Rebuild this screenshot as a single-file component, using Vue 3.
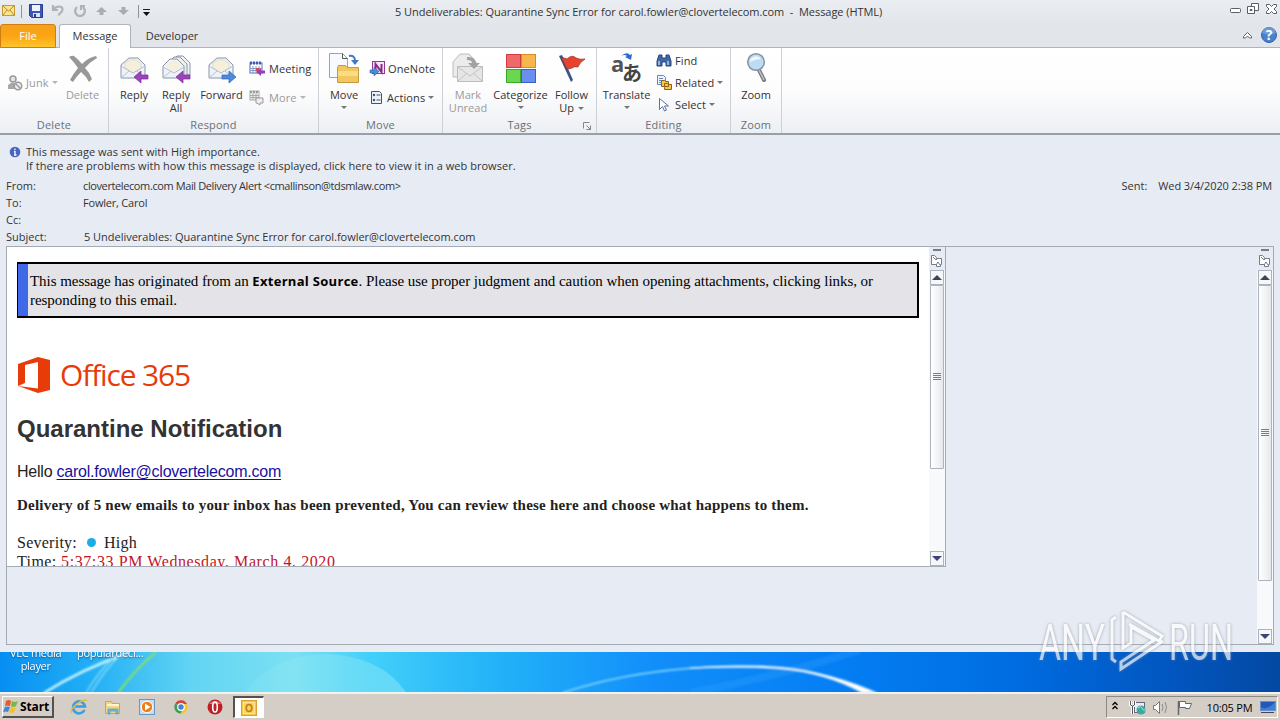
<template>
  <div class="screen">
    <div class="window">
      <header class="titlebar">
        <div class="quick">
          <svg width="155" height="24" viewBox="0 0 155 24">
            <rect x="2.500" y="5.500" width="12" height="10" fill="#fbe58a" stroke="#c79a35" />
            <path d="M3 6l5.500 5L14 6M3 15l4-5m7 5l-4-5" fill="none" stroke="#b98a2c" />
            <path d="M21.500 5v13" stroke="#8d939b" />
            <path d="M29.500 4.500h13v13h-11l-2-2z" fill="#3c57b5" stroke="#283c8c" />
            <rect x="32" y="5" width="8" height="6" fill="#eef2fb" />
            <rect x="33" y="13" width="7" height="4" fill="#dbe1ee" />
            <rect x="34" y="14" width="2" height="3" fill="#283c8c" />
            <path d="M53 5v5h5M53.500 9.500c3-4 9-4 9 0 0 3-3 3-4 6" fill="none" stroke="#b0b3b7" stroke-width="2.200" />
            <path d="M77 7c-4 4-1 9 3 9s7-5 3-9M81 10V6h4" fill="none" stroke="#b0b3b7" stroke-width="2.200" />
            <path d="M101.500 7l5.500 5h-3.500v3h-4v-3H96z" fill="#aaadb1" />
            <path d="M118 10h3.500V7h4v3h3.500l-5.500 5z" fill="#aaadb1" />
            <path d="M138.500 5v13" stroke="#8d939b" />
            <path d="M143 9.500h7" stroke="#222" />
            <path d="M143 12h7l-3.500 4z" fill="#111" />
          </svg>
        </div>
        <span class="caption">5 Undeliverables: Quarantine Sync Error for carol.fowler@clovertelecom.com&nbsp; -&nbsp; Message (HTML)</span>
        <svg class="winbtns" width="52" height="24" viewBox="0 0 52 24" fill="#fff" stroke="#5a6069">
          <rect x="2.500" y="8.500" width="10" height="4" rx="1" />
          <path d="M23.500 3.500h7v7h-7z" />
          <path d="M19.500 6.500h7v7h-7zM22 9.500h2v1h-2z" />
          <path d="M38.500 4.500h3l2 2 2-2h3v2l-2.500 2.500 2.500 2.500v2h-3l-2-2-2 2h-3v-2l2.500-2.500-2.500-2.500z" />
        </svg>
      </header>

      <nav class="tabs">
        <span class="tab file">File</span>
        <span class="tab message">Message</span>
        <span class="tab developer">Developer</span>
        <svg class="help" width="42" height="24" viewBox="0 0 42 24">
          <path d="M5.500 12.500l4-4 4 4v1.500h-2l-2-2-2 2h-2z" fill="#fff" stroke="#5a6069" />
          <circle cx="31" cy="11" r="7.500" fill="#4a80cc" stroke="#3262ad" />
          <path d="M24 9a7 6 0 0 1 14 0q-7 3-14 0z" fill="#82acdf" opacity=".6" />
          <text x="31" y="16" text-anchor="middle" class="qmark">?</text>
        </svg>
      </nav>

      <section class="ribbon">
        <div class="group g-delete">
          <div class="tools">
            <div class="col c-junk">
              <div class="small off">
                <svg width="16" height="18" viewBox="0 0 16 18">
                  <circle cx="6" cy="5" r="3" fill="#e5e5e5" stroke="#999" stroke-width="1.500" />
                  <path d="M1 15V11q5-5 9 0v4z" fill="#a8a8a8" />
                  <circle cx="11" cy="12" r="3.700" fill="#f0f0f0" stroke="#999" stroke-width="1.500" />
                  <path d="M8.500 9.500l5 5" stroke="#999" stroke-width="1.500" />
                </svg>
                <span>Junk</span><i class="arrow"></i>
              </div>
            </div>
            <div class="big off b-delete">
              <svg width="32" height="32" viewBox="0 0 32 32">
                <path d="M2 5q3-2 5-1 5 4 8 8 7-7 14-8l1 2q-7 4-12 10 5 5 7 11l-3 3q-3-6-8-10-5 5-8 10l-3-2q3-6 8-12Q7 10 2 5z" fill="#989898" />
              </svg>
              <span>Delete</span>
            </div>
          </div>
          <div class="glabel">Delete</div>
        </div>

        <div class="group g-respond">
          <div class="tools">
            <div class="big b-reply">
              <svg width="32" height="32" viewBox="0 0 32 32">
                <path d="M3 13l8-7h9l7 7v13H3z" fill="#eef3fa" stroke="#8996a8" />
                <path d="M7 16v-5l5-3h6l5 3v5l-8 5z" fill="#f5efdc" stroke="#ddd6be" stroke-width=".7" />
                <path d="M3 14l12 7 12-7M3 26l8-7m16 7l-8-7" fill="none" stroke="#b4c0d2" />
                <path d="M16 25l7-6v4h7v4h-7v4z" fill="#9b45bb" stroke="#7a2a9c" stroke-width=".7" />
              </svg>
              <span>Reply</span>
            </div>
            <div class="big b-replyall">
              <svg width="32" height="32" viewBox="0 0 32 32">
                <path d="M11 10l6-6h6l7 7v12H13z" fill="#eef3fa" stroke="#8996a8" />
                <path d="M8 11l6-6h6l7 7v12H9z" fill="#f3eee0" stroke="#8996a8" />
                <path d="M3 14l7-7h7l7 7v12H3z" fill="#eef3fa" stroke="#8996a8" />
                <path d="M7 16v-4l4-3h5l4 3v4l-6 4z" fill="#f5efdc" />
                <path d="M3 15l11 6 10-6M3 26l8-7" fill="none" stroke="#b4c0d2" />
                <path d="M16 25l7-6v4h7v4h-7v4z" fill="#9b45bb" stroke="#7a2a9c" stroke-width=".7" />
              </svg>
              <span>Reply</span><span>All</span>
            </div>
            <div class="big b-forward">
              <svg width="32" height="32" viewBox="0 0 32 32">
                <path d="M3 13l8-7h9l7 7v13H3z" fill="#eef3fa" stroke="#8996a8" />
                <path d="M7 16v-5l5-3h6l5 3v5l-8 5z" fill="#f5efdc" stroke="#ddd6be" stroke-width=".7" />
                <path d="M3 14l12 7 12-7M3 26l8-7m16 7l-8-7" fill="none" stroke="#b4c0d2" />
                <path d="M30 25l-7-6v4h-7v4h7v4z" fill="#4d8add" stroke="#2f65b8" stroke-width=".7" />
              </svg>
              <span>Forward</span>
            </div>
            <div class="col c-meeting">
              <div class="small">
                <svg width="17" height="17" viewBox="0 0 17 17">
                  <rect x="1" y="3" width="12" height="10" fill="#fff" stroke="#5670b8" />
                  <path d="M1 3h12" stroke="#3c5cb4" stroke-width="3" stroke-dasharray="2 1" />
                  <path d="M4 6v7m3-7v7m3-7v7M1 8.500h12m-12 2h12" stroke="#8498cc" />
                  <rect x="7" y="8" width="3" height="3" fill="#d44c4c" />
                  <path d="M7 12l5-4v2.500h4v3h-4V16z" fill="#9b3fb2" />
                </svg>
                <span>Meeting</span>
              </div>
              <div class="small off">
                <svg width="17" height="17" viewBox="0 0 17 17">
                  <rect x="1" y="2" width="9" height="9" fill="#eee" stroke="#aaa" />
                  <path d="M1 3h9" stroke="#999" stroke-width="2" stroke-dasharray="2 1" />
                  <path d="M4 4v7m3-7v7M1 6.500h9m-9 2h9" stroke="#aaa" />
                  <path d="M7 9h7v5h-3v2l-3-2H7z" fill="#eee" stroke="#999" />
                </svg>
                <span>More</span><i class="arrow"></i>
              </div>
            </div>
          </div>
          <div class="glabel">Respond</div>
        </div>

        <div class="group g-move">
          <div class="tools">
            <div class="big b-move">
              <svg width="32" height="32" viewBox="0 0 32 32">
                <path d="M1.500 1.500h13l5 5v19h-18z" fill="#f7faff" stroke="#8aa5cf" />
                <path d="M14.500 1.500v5h5" fill="none" stroke="#555" />
                <path d="M21 4q6-1 6 5" fill="none" stroke="#3f78c9" stroke-width="2" />
                <path d="M23 8h8l-4 5z" fill="#3f78c9" />
                <path d="M9.500 15.500l1-2h7l2 2h11v15h-21z" fill="#f3c65e" stroke="#c29a45" />
                <path d="M10 19h20v5H10z" fill="#fbdc86" />
              </svg>
              <span>Move</span><i class="arrow under"></i>
            </div>
            <div class="col c-onenote">
              <div class="small">
                <svg width="16" height="17" viewBox="0 0 16 17">
                  <rect x="3.500" y="1.500" width="12" height="12" fill="#f6e4f4" stroke="#933895" />
                  <path d="M6.500 12V4l6 8V4" fill="none" stroke="#85288a" stroke-width="2" />
                  <path d="M1 10h4V7l5 4.500L5 16v-3H1z" fill="#4c8cda" stroke="#2c62ab" stroke-width=".6" />
                </svg>
                <span>OneNote</span>
              </div>
              <div class="small">
                <svg width="15" height="17" viewBox="0 0 15 17">
                  <path d="M2.500 2.500h8l2 2v10h-10z" fill="#edf3fb" stroke="#42526d" />
                  <path d="M7.500 6h4M7.500 11h4" stroke="#42526d" />
                  <circle cx="5" cy="6" r="1.200" fill="#42526d" /><circle cx="5" cy="11" r="1.200" fill="#42526d" />
                </svg>
                <span>Actions</span><i class="arrow"></i>
              </div>
            </div>
          </div>
          <div class="glabel">Move</div>
        </div>

        <div class="group g-tags">
          <div class="tools">
            <div class="big off b-mark">
              <svg width="32" height="32" viewBox="0 0 32 32">
                <path d="M1 10l7-8h9l7 8v15H1z" fill="#ececec" stroke="#bcbcbc" />
                <path d="M5.500 14.500h25v15h-25z" fill="#e6e6e6" stroke="#bcbcbc" />
                <path d="M6 15l12 9 12-9M6 29l9-8m15 8l-9-8" fill="none" stroke="#c2c2c2" />
                <path d="M15 5q8-1 9 6h4l-6 6-6-6h4q0-3-5-3z" fill="#a2a2a2" />
              </svg>
              <span>Mark</span><span>Unread</span>
            </div>
            <div class="big b-cat">
              <svg width="32" height="32" viewBox="0 0 32 32">
                <rect x="1.500" y="2.500" width="14" height="13" fill="#f0696a" stroke="#d23c3c" />
                <rect x="16.500" y="2.500" width="14" height="13" fill="#f9b64c" stroke="#d98c22" />
                <rect x="1.500" y="17.500" width="14" height="13" fill="#6bd64f" stroke="#3ba829" />
                <rect x="16.500" y="17.500" width="14" height="13" fill="#6a90ef" stroke="#3a5fcc" />
              </svg>
              <span>Categorize</span><i class="arrow under"></i>
            </div>
            <div class="big b-follow">
              <svg width="32" height="32" viewBox="0 0 32 32">
                <path d="M3 4l3-1 11 25-2 2z" fill="#3c5684" />
                <path d="M5 5q3 1 6 2 5-5 9-1 4 2 9 1-6 4-7 8-4-1-6 1-3 1-5 1z" fill="#e8442d" stroke="#8e2a20" stroke-width=".7" />
              </svg>
              <span>Follow</span><span>Up<i class="arrow"></i></span>
            </div>
          </div>
          <div class="glabel">Tags</div>
          <svg class="launcher" width="9" height="9" viewBox="0 0 9 9" fill="none" stroke="#80868f">
            <path d="M.5 6.500v-6h6M3.500 3.500l4 4M7.500 3.500v4h-4" />
          </svg>
        </div>

        <div class="group g-edit">
          <div class="tools">
            <div class="big b-trans">
              <svg width="32" height="32" viewBox="0 0 32 32">
                <path d="M10 4q6-5 9-1l2-1-1 6-6-3 2-1q-2-2-6 0z" fill="#2f69cf" />
                <text x="0" y="20" class="latin-a">a</text>
                <text x="11" y="29" class="kana-a">あ</text>
              </svg>
              <span>Translate</span><i class="arrow under"></i>
            </div>
            <div class="col c-find">
              <div class="small">
                <svg width="16" height="17" viewBox="0 0 16 17">
                  <path d="M3 3h3v3h4V3h3l2 6v5h-5v-4H6v4H1V9z" fill="#3e66a8" stroke="#274679" />
                  <path d="M3 9v4m9-4v4" stroke="#b6cdee" stroke-width="1.500" />
                </svg>
                <span>Find</span>
              </div>
              <div class="small">
                <svg width="16" height="17" viewBox="0 0 16 17">
                  <path d="M1.500 1.500h6l2 2v7h-8z" fill="#edf3ff" stroke="#6d86b8" />
                  <path d="M3 4.500h4M3 6.500h5M3 8.500h4" stroke="#6d86b8" />
                  <path d="M5.500 8.500v-2h3l1 1h3v5h-7zM8.500 13.500v-4h3l1 1h3v5h-7z" fill="#f7c64d" stroke="#8d6417" />
                </svg>
                <span>Related</span><i class="arrow"></i>
              </div>
              <div class="small">
                <svg width="16" height="17" viewBox="0 0 16 17">
                  <path d="M3.500 2.500v11l3-3 2 4.500 2-1-2-4h4z" fill="#fff" stroke="#5b729c" />
                </svg>
                <span>Select</span><i class="arrow"></i>
              </div>
            </div>
          </div>
          <div class="glabel">Editing</div>
        </div>

        <div class="group g-zoom">
          <div class="tools">
            <div class="big b-zoom">
              <svg width="32" height="32" viewBox="0 0 32 32">
                <path d="M19 18l5 10" stroke="#777c84" stroke-width="4" stroke-linecap="round" />
                <path d="M19 18l5 10" stroke="#c2c6cc" stroke-width="1.500" />
                <circle cx="16" cy="10" r="8.300" fill="#bcdbf5" stroke="#8b949f" stroke-width="1.600" />
                <path d="M10 10a6 6 0 0 1 11-3q-5 0-11 3z" fill="#edf7ff" />
              </svg>
              <span>Zoom</span>
            </div>
          </div>
          <div class="glabel">Zoom</div>
        </div>
      </section>

      <section class="info">
        <div class="notice">
          <svg width="12" height="12" viewBox="0 0 12 12">
            <circle cx="6" cy="6" r="5.300" fill="#4766c0" />
            <path d="M6 2.500v1.500M6 5v4M5 5.500h1M5 9h2.500" stroke="#fff" stroke-width="1.300" />
          </svg>
          <div>
            <p>This message was sent with High importance.</p>
            <p>If there are problems with how this message is displayed, click here to view it in a web browser.</p>
          </div>
        </div>
        <dl class="fields">
          <dt>From:</dt>
          <dd><span class="v-from">clovertelecom.com Mail Delivery Alert &lt;cmallinson@tdsmlaw.com&gt;</span><span class="sent">Sent:</span><span class="date">Wed 3/4/2020 2:38 PM</span></dd>
          <dt>To:</dt>
          <dd class="v-to">Fowler, Carol</dd>
          <dt>Cc:</dt>
          <dd></dd>
          <dt>Subject:</dt>
          <dd class="v-subject">5 Undeliverables: Quarantine Sync Error for carol.fowler@clovertelecom.com</dd>
        </dl>
      </section>

      <main class="outer">
        <div class="inner">
          <article class="mail">
            <div class="external">
              <div class="stripe"></div>
              <p>
                This message has originated from an <b>External Source</b>. Please use proper judgment and caution when opening attachments, clicking links, or<br>
                responding to this email.
              </p>
            </div>
            <div class="office">
              <svg width="34" height="38" viewBox="0 0 34 38">
                <path d="M1 8L21 1l12 3v30l-12 3L1 30l20 2.500V6L8 9v18l-7 3z" fill="#e83b0a" />
              </svg>
              <span>Office 365</span>
            </div>
            <h1>Quarantine Notification</h1>
            <p class="hello">Hello <a>carol.fowler@clovertelecom.com</a></p>
            <p class="delivery">Delivery of 5 new emails to your inbox has been prevented, You can review these here and choose what happens to them.</p>
            <p class="sev"><span>Severity:</span><i class="dot"></i><span>High</span></p>
            <p class="time">Time: <em>5:37:33 PM Wednesday, March 4, 2020</em></p>
          </article>
          <div class="scroll s-inner">
            <svg class="pager" width="16" height="23" viewBox="0 0 16 23"><path :d="pagerPath" fill="#fff" stroke="#777d86" /><path d="M4 3h8" stroke="#777d86" stroke-width="2" /></svg>
            <div class="sbtn"><i class="up"></i></div>
            <div class="thumb"><i></i></div>
            <div class="sbtn last"><i class="down"></i></div>
          </div>
        </div>
        <div class="scroll s-outer">
          <svg class="pager" width="16" height="23" viewBox="0 0 16 23"><path :d="pagerPath" fill="#fff" stroke="#777d86" /><path d="M4 3h8" stroke="#777d86" stroke-width="2" /></svg>
          <div class="sbtn"><i class="up"></i></div>
          <div class="thumb"><i></i></div>
          <div class="sbtn last"><i class="down"></i></div>
        </div>
      </main>
    </div>

    <div class="desktop">
      <svg class="rays" width="1280" height="40" viewBox="0 0 1280 40" fill="none">
        <defs>
          <filter id="soft" x="-20%" y="-50%" width="140%" height="200%"><feGaussianBlur stdDeviation="0.8" /></filter>
          <linearGradient id="bubble" x1="0" y1="0" x2="1" y2="0">
            <stop offset="0" stop-color="#a5f0f4" stop-opacity=".1" />
            <stop offset="1" stop-color="#8fe9f5" stop-opacity=".5" />
          </linearGradient>
        </defs>
        <path d="M244 42Q270 4 325 2q58 2 82 40z" fill="url(#bubble)" />
        <g filter="url(#soft)">
          <path d="M44 41Q80 18 128 1" stroke="#c8f6ff" stroke-width="2.500" />
          <path d="M86 41Q98 20 116 3M91 41Q103 20 120 3" stroke="#8fe2fa" stroke-width="1.200" />
          <path d="M118 41Q133 20 156 0" stroke="#86e264" stroke-width="2.200" />
          <path d="M690 41Q780 24 860 -2" stroke="#3fa8ff" stroke-width="8" opacity=".25" />
          <path d="M562 41Q640 15 738 14.500" stroke="#8adcff" stroke-width="1.500" />
          <path d="M690 15.500Q740 12 782 15Q830 20 878 41H862Q826 21 780 17Q738 14.500 690 16.500z" fill="#fff" />
        </g>
      </svg>
      <div class="dicon vlc">VLC media<br>player</div>
      <div class="dicon pop">populardeci...</div>
    </div>

    <footer class="taskbar">
      <div class="start">
        <svg width="16" height="16" viewBox="0 0 16 16">
          <path d="M3 2q3-2 5 0L7 7Q4 6 2 7z" fill="#e65a2c" />
          <path d="M9 2q3 2 6 0l-2 5q-3 2-5 0z" fill="#75b843" />
          <path d="M2 8q3-1 5 0l-2 5q-2-1-5 0z" fill="#3f86d4" />
          <path d="M8 8q3 2 5 0l-2 5q-3 2-5 0z" fill="#f4bf2d" />
        </svg>
        <span>Start</span>
      </div>
      <div class="pins">
        <svg width="18" height="18" viewBox="0 0 18 18">
          <path d="M14.500 12A6 6 0 1 1 15 8.500H5" fill="none" stroke="#3f9ddd" stroke-width="2.600" />
          <path d="M2 15Q-1 12 7 6t10-3" fill="none" stroke="#e9bb42" stroke-width="1.400" />
        </svg>
        <svg width="18" height="18" viewBox="0 0 18 18">
          <path d="M1.500 3.500h6l1 2h7v10h-14z" fill="#f2d582" stroke="#d0a648" />
          <path d="M3 7h12" stroke="#fff5c8" stroke-width="2" />
          <path d="M4 16v-5h10v5h-2v-3H6v3z" fill="#71bde2" stroke="#4a98c4" stroke-width=".7" />
        </svg>
        <svg width="18" height="18" viewBox="0 0 18 18">
          <rect x="1.500" y="1.500" width="15" height="15" fill="#c8def0" stroke="#6699c6" />
          <circle cx="9" cy="9" r="5.700" fill="#ee7d1a" stroke="#fff" /><path d="M7 5.500l5.500 3.500L7 12.500z" fill="#fff" />
        </svg>
        <svg width="18" height="18" viewBox="0 0 18 18">
          <path d="M9 9L3.300 5.500A6.700 6.700 0 0 1 15 6z" fill="#d94335" />
          <path d="M9 9L3.300 5.500A6.700 6.700 0 0 0 8.500 15.700L11.500 10z" fill="#3f9e50" />
          <path d="M9 9l2.500 1-3 5.700A6.700 6.700 0 0 0 15 6H9z" fill="#f5c532" />
          <circle cx="9" cy="9" r="3.300" fill="#4285d8" stroke="#fff" stroke-width="1.200" />
        </svg>
        <svg width="18" height="18" viewBox="0 0 18 18">
          <circle cx="9" cy="9" r="7.500" fill="#bd2027" /><path d="M3 6a7 6 0 0 1 12 0z" fill="#dd7372" />
          <ellipse cx="9" cy="9" rx="2.300" ry="5" fill="none" stroke="#fff" stroke-width="1.600" />
        </svg>
      </div>
      <div class="task">
        <svg width="18" height="18" viewBox="0 0 18 18">
          <rect x="1.500" y="1.500" width="15" height="15" fill="#f8c443" stroke="#dca02a" />
          <rect x="3.500" y="3.500" width="11" height="11" fill="#fbd25c" stroke="#ffe39c" />
          <ellipse cx="9" cy="9" rx="2.800" ry="3.500" fill="none" stroke="#b98418" stroke-width="1.700" />
        </svg>
      </div>
      <div class="tray">
        <svg width="84" height="20" viewBox="0 0 84 20">
          <path d="M5.500 8L8 5.500 10.500 8M5.500 12L8 9.500l2.500 2.500" fill="none" stroke="#000" stroke-width="1.300" />
          <rect x="27.500" y="5.500" width="10" height="10" fill="#e8edf3" stroke="#667" />
          <path d="M23.500 4v4q2 2 4 0V4M25.500 9v8" fill="none" stroke="#fff" stroke-width="3" />
          <path d="M23.500 4v4q2 2 4 0V4M25.500 9v8" fill="none" stroke="#556" />
          <circle cx="34" cy="13" r="4.500" fill="#3ba9a0" /><path d="M31 11q3-3 4 0t3 2" stroke="#a4e0d2" fill="none" />
          <path d="M46.500 8.500h2l4-4v12l-4-4h-2z" fill="#fff" stroke="#777" />
          <path d="M55 7q2 3 0 7M58 5q3 5 0 11" fill="none" stroke="#8a8a8a" />
          <path d="M71.500 4v14" stroke="#666" stroke-width="1.500" />
          <path d="M72.500 4.500h6v2h6l-2 5h-4v-1h-6z" fill="#fff" stroke="#666" />
        </svg>
        <span>10:05 PM</span>
        <svg width="16" height="16" viewBox="0 0 16 16">
          <rect x=".5" y="2.500" width="15" height="9" fill="#2458b8" stroke="#6a8fc4" />
          <path d="M1 8q6 4 14-5v8H1z" fill="#3c7fd8" /><path d="M1 13.500h13" stroke="#445" />
        </svg>
      </div>
    </footer>

    <svg class="watermark" width="200" height="70" viewBox="0 0 200 70">
      <text x="3" y="55" textLength="66" lengthAdjust="spacingAndGlyphs">ANY</text>
      <text x="133" y="55" textLength="64" lengthAdjust="spacingAndGlyphs">RUN</text>
      <path d="M80 12l-4 3v39l4 3M87 7v36l8-5V22l23 13-33 22v7l42-28M87 7l39 24-3 5-30-17" />
    </svg>
  </div>
</template>

<script setup>
// Small document-with-arrows glyph at the top of both scrollbars
const pagerPath = 'M2.5 8.500h3l2 2v1h5v6h-1v2h-4v-2h-5zM4 10l3 3 2-2M7 18l2-3 2 3'
</script>

<style>
body {
  margin: 0;
  overflow: hidden;
}
</style>

<style scoped>
.screen {
  position: relative;
  width: 1280px;
  height: 720px;
  overflow: hidden;
  font-family: "Open Sans", "Noto Sans", sans-serif;
  font-size: 11px;
  color: #333;
}

svg {
  display: block;
  flex: none;
  overflow: visible;
}

p, h1, dl, dd {
  margin: 0;
}

.window {
  height: 652px;
  background: #e7ebf3;
  display: flex;
  flex-direction: column;
}

.titlebar {
  height: 24px;
  display: flex;
  background: linear-gradient(#eaeef2, #e2e6ea);
}

.quick {
  width: 395px;
}

.caption {
  flex: 1;
  line-height: 24px;
  letter-spacing: -0.05px;
  white-space: nowrap;
}

.tabs {
  height: 24px;
  box-sizing: border-box;
  display: flex;
  background: #e2e6ea;
  border-bottom: 1px solid #b0b5bc;
}

.tab {
  box-sizing: border-box;
  height: 24px;
  line-height: 23px;
  text-align: center;
}

.file {
  width: 56px;
  line-height: 21px;
  color: #fff;
  border: 1px solid #cf7d10;
  border-radius: 3px 3px 0 0;
  background: linear-gradient(#f5a21b, #fba412 50%, #ffc52c);
}

.message {
  width: 72px;
  margin-left: 3px;
  line-height: 21px;
  background: #fff;
  border: 1px solid #b0b5bc;
  border-bottom: 0;
  border-radius: 3px 3px 0 0;
}

.developer {
  width: 82px;
}

.help {
  margin-left: auto;
}

.qmark {
  font: bold 14px "Open Sans", sans-serif;
  fill: #fff;
}

.ribbon {
  height: 87px;
  box-sizing: border-box;
  display: flex;
  background: linear-gradient(#fff, #fdfdfe 50%, #eceff3);
  border-bottom: 2px solid #989fa9;
}

.group {
  position: relative;
  box-sizing: border-box;
  border-right: 1px solid #ccd1d8;
}

.g-delete { width: 109px; }
.g-respond { width: 210px; }
.g-move { width: 124px; }
.g-tags { width: 154px; }
.g-edit { width: 134px; }
.g-zoom { width: 51px; }

.tools {
  height: 70px;
  display: flex;
}

.glabel {
  line-height: 14px;
  text-align: center;
  letter-spacing: 0.2px;
  color: #6a7079;
}

.big {
  display: flex;
  flex-direction: column;
  align-items: center;
  padding-top: 4px;
  line-height: 13px;
  white-space: nowrap;
}

.big svg {
  margin-bottom: 4px;
}

.col {
  display: flex;
  flex-direction: column;
  justify-content: center;
  padding-bottom: 1px;
}

.small {
  height: 22px;
  display: flex;
  align-items: center;
  gap: 3px;
  letter-spacing: 0.1px;
  white-space: nowrap;
}

.c-meeting, .c-onenote {
  gap: 7px;
  padding-bottom: 0;
}

.off {
  color: #9a9a9a;
}

.c-junk { width: 59px; margin-left: 7px; }
.b-delete { width: 33px; }
.b-reply { width: 42px; margin-left: 4px; }
.b-replyall { width: 42px; }
.b-forward { width: 49px; }
.c-meeting { margin-left: 3px; }
.b-move { width: 50px; }
.b-mark { width: 50px; }
.b-cat { width: 55px; }
.b-follow { width: 47px; }
.b-trans { width: 59px; }
.b-zoom { width: 50px; }

.arrow {
  display: inline-block;
  border: 3px solid transparent;
  border-top: 3px solid #777;
  border-bottom: 0;
  margin-left: 0;
}

.off .arrow {
  border-top-color: #b5b5b5;
}

.b-follow .arrow {
  margin: 0 0 2px 4px;
}

.big .under {
  margin: 5px 0 0;
}

.launcher {
  position: absolute;
  right: 4px;
  bottom: 2px;
}

.latin-a {
  font: bold 22px "Open Sans", sans-serif;
  fill: #555;
}

.kana-a {
  font: bold 20px "Noto Sans CJK JP", sans-serif;
  fill: #444;
}

.info {
  height: 111px;
  padding: 0 8px 0 6px;
  box-sizing: border-box;
}

.notice {
  display: flex;
  gap: 5px;
  padding: 10px 0 0 3px;
  line-height: 14px;
  letter-spacing: 0.03px;
}

.notice svg {
  margin-top: 1px;
}

.fields {
  display: grid;
  grid-template-columns: 77px 1fr;
  line-height: 17px;
  margin-top: 4px;
}

.fields dd {
  display: flex;
}

.v-from {
  letter-spacing: -0.39px;
}

.v-to {
  letter-spacing: -0.2px;
}

.fields .v-subject {
  padding-left: 1px;
  letter-spacing: -0.02px;
}

.sent {
  margin-left: auto;
}

.date {
  margin-left: 11px;
  letter-spacing: -0.1px;
}

.outer {
  position: relative;
  width: 1268px;
  height: 399px;
  box-sizing: border-box;
  margin-left: 6px;
  border: 1px solid #a5abb4;
  display: flex;
  justify-content: space-between;
  align-items: flex-start;
}

.inner {
  width: 939px;
  height: 320px;
  box-sizing: border-box;
  border-right: 1px solid #a5abb4;
  border-bottom: 1px solid #a5abb4;
  background: #fff;
  display: flex;
  overflow: hidden;
}

.mail {
  width: 922px;
  height: 319px;
  box-sizing: border-box;
  padding: 15px 10px 0 10px;
  overflow: hidden;
  color: #222;
  font-family: "Liberation Serif", serif;
  font-size: 16px;
  white-space: nowrap;
}

.external {
  display: flex;
  height: 56px;
  box-sizing: border-box;
  border: 2px solid #000;
  border-left-width: 1px;
  background: #e4e3e7;
  color: #000;
}

.stripe {
  width: 10px;
  background: #4069ea;
}

.external p {
  padding: 8px 0 0 2px;
  line-height: 19px;
  font-size: 15px;
  letter-spacing: -0.05px;
}

.external b {
  font: bold 13px "Open Sans", sans-serif;
  letter-spacing: 0.3px;
}

.office {
  display: flex;
  align-items: center;
  gap: 9px;
  height: 38px;
  margin-top: 38px;
  color: #e83b0a;
  font: 400 30px "Open Sans", sans-serif;
  letter-spacing: -1.15px;
}

.office span {
  margin-top: -2px;
}

h1 {
  margin-top: 21px;
  font: bold 24px/28px "Liberation Sans", sans-serif;
  color: #333;
}

.hello {
  margin-top: 19px;
  font: 16px/20px "Liberation Sans", sans-serif;
  letter-spacing: -0.23px;
}

.hello a {
  color: #1a0f9c;
  text-decoration: underline;
  text-underline-offset: 2px;
}

.delivery {
  margin-top: 14px;
  font-weight: bold;
  font-size: 15px;
  line-height: 18px;
  letter-spacing: 0.21px;
}

.sev {
  display: flex;
  align-items: center;
  margin-top: 19px;
  line-height: 19px;
  letter-spacing: 0.25px;
}

.dot {
  width: 9px;
  height: 9px;
  border-radius: 50%;
  background: #18ade8;
  margin: 0 8px 0 10px;
}

.time {
  line-height: 19px;
  letter-spacing: 0.4px;
}

.time em {
  font-style: normal;
  letter-spacing: 0.59px;
  color: #c41226;
}

.scroll {
  display: flex;
  flex-direction: column;
  align-items: center;
  width: 16px;
  background: #f8f9fa;
}

.s-inner { height: 319px; }
.s-outer { height: 397px; }

.pager {
  background: #e7ebf3;
}

.sbtn {
  width: 14px;
  height: 15px;
  box-sizing: border-box;
  border: 1px solid #adb3bc;
  background: #f6f7f9;
  display: flex;
  align-items: center;
  justify-content: center;
}

.last {
  margin-top: auto;
}

.up, .down {
  border: 5px solid transparent;
  border-top: 0;
  border-bottom: 5px solid #3d4459;
}

.down {
  border-top: 5px solid #3d4475;
  border-bottom: 0;
}

.thumb {
  width: 14px;
  box-sizing: border-box;
  border: 1px solid #adb3bc;
  border-radius: 1px;
  background: linear-gradient(90deg, #fff, #e6e9ec);
  display: flex;
  align-items: center;
  justify-content: center;
}

.s-inner .thumb { height: 184px; }
.s-outer .thumb { height: 296px; }

.thumb i {
  width: 8px;
  height: 7px;
  margin-bottom: 2px;
  background: repeating-linear-gradient(#777d86 0 1px, transparent 1px 2px);
}

.desktop {
  position: relative;
  height: 40px;
  overflow: hidden;
  background: linear-gradient(90deg, #068ff2, #22aef5 7%, #62d5f3 15%, #7ce0f2 23%, #42cffa 29%, #22b2f8 39%, #128efa 51%, #057ff4 65%, #006de2 79%, #0255be 92%, #0349a2);
}

.rays, .dicon {
  position: absolute;
}

.rays {
  left: 0;
  top: 0;
}

.dicon {
  color: #fff;
  line-height: 13px;
  text-align: center;
  letter-spacing: -0.35px;
  text-shadow: 0 1px 2px #0a4a80;
}

.vlc { left: 10px; top: -6px; letter-spacing: -0.3px; }
.pop { left: 77px; top: -6px; letter-spacing: -0.25px; }

.taskbar {
  height: 28px;
  box-sizing: border-box;
  border-top: 2px solid #f4f2ee;
  background: #d5cec6;
  display: flex;
  align-items: center;
}

.start {
  width: 52px;
  height: 22px;
  margin-left: 2px;
  box-sizing: border-box;
  border: 1px solid #fff;
  border-right: 2px solid #55514d;
  border-bottom: 2px solid #55514d;
  display: flex;
  align-items: center;
  gap: 1px;
  color: #000;
  font-size: 12px;
  font-weight: bold;
}

.start span {
  letter-spacing: -0.1px;
}

.pins {
  display: flex;
  gap: 16px;
  margin-left: 16px;
}

.task {
  width: 31px;
  height: 22px;
  box-sizing: border-box;
  margin-left: 9px;
  border: 1px solid #fff;
  border-top: 2px solid #55514d;
  border-left: 2px solid #55514d;
  background: #fff;
  display: flex;
  align-items: center;
  justify-content: center;
}

.tray {
  width: 172px;
  height: 22px;
  box-sizing: border-box;
  margin: 0 2px 0 auto;
  border: 1px solid #fff;
  border-top-color: #8d8984;
  border-left-color: #8d8984;
  display: flex;
  align-items: center;
  color: #000;
}

.tray span {
  width: 61px;
  margin-left: 8px;
  text-align: center;
  letter-spacing: -0.2px;
}

.watermark {
  position: absolute;
  left: 1036px;
  top: 605px;
  opacity: 0.7;
  filter: drop-shadow(0 0 1.5px #7d8592);
}

.watermark text {
  font: 400 50px Roboto, sans-serif;
  fill: #fff;
}

.watermark path {
  fill: none;
  stroke: #fff;
  stroke-width: 3;
}
</style>
